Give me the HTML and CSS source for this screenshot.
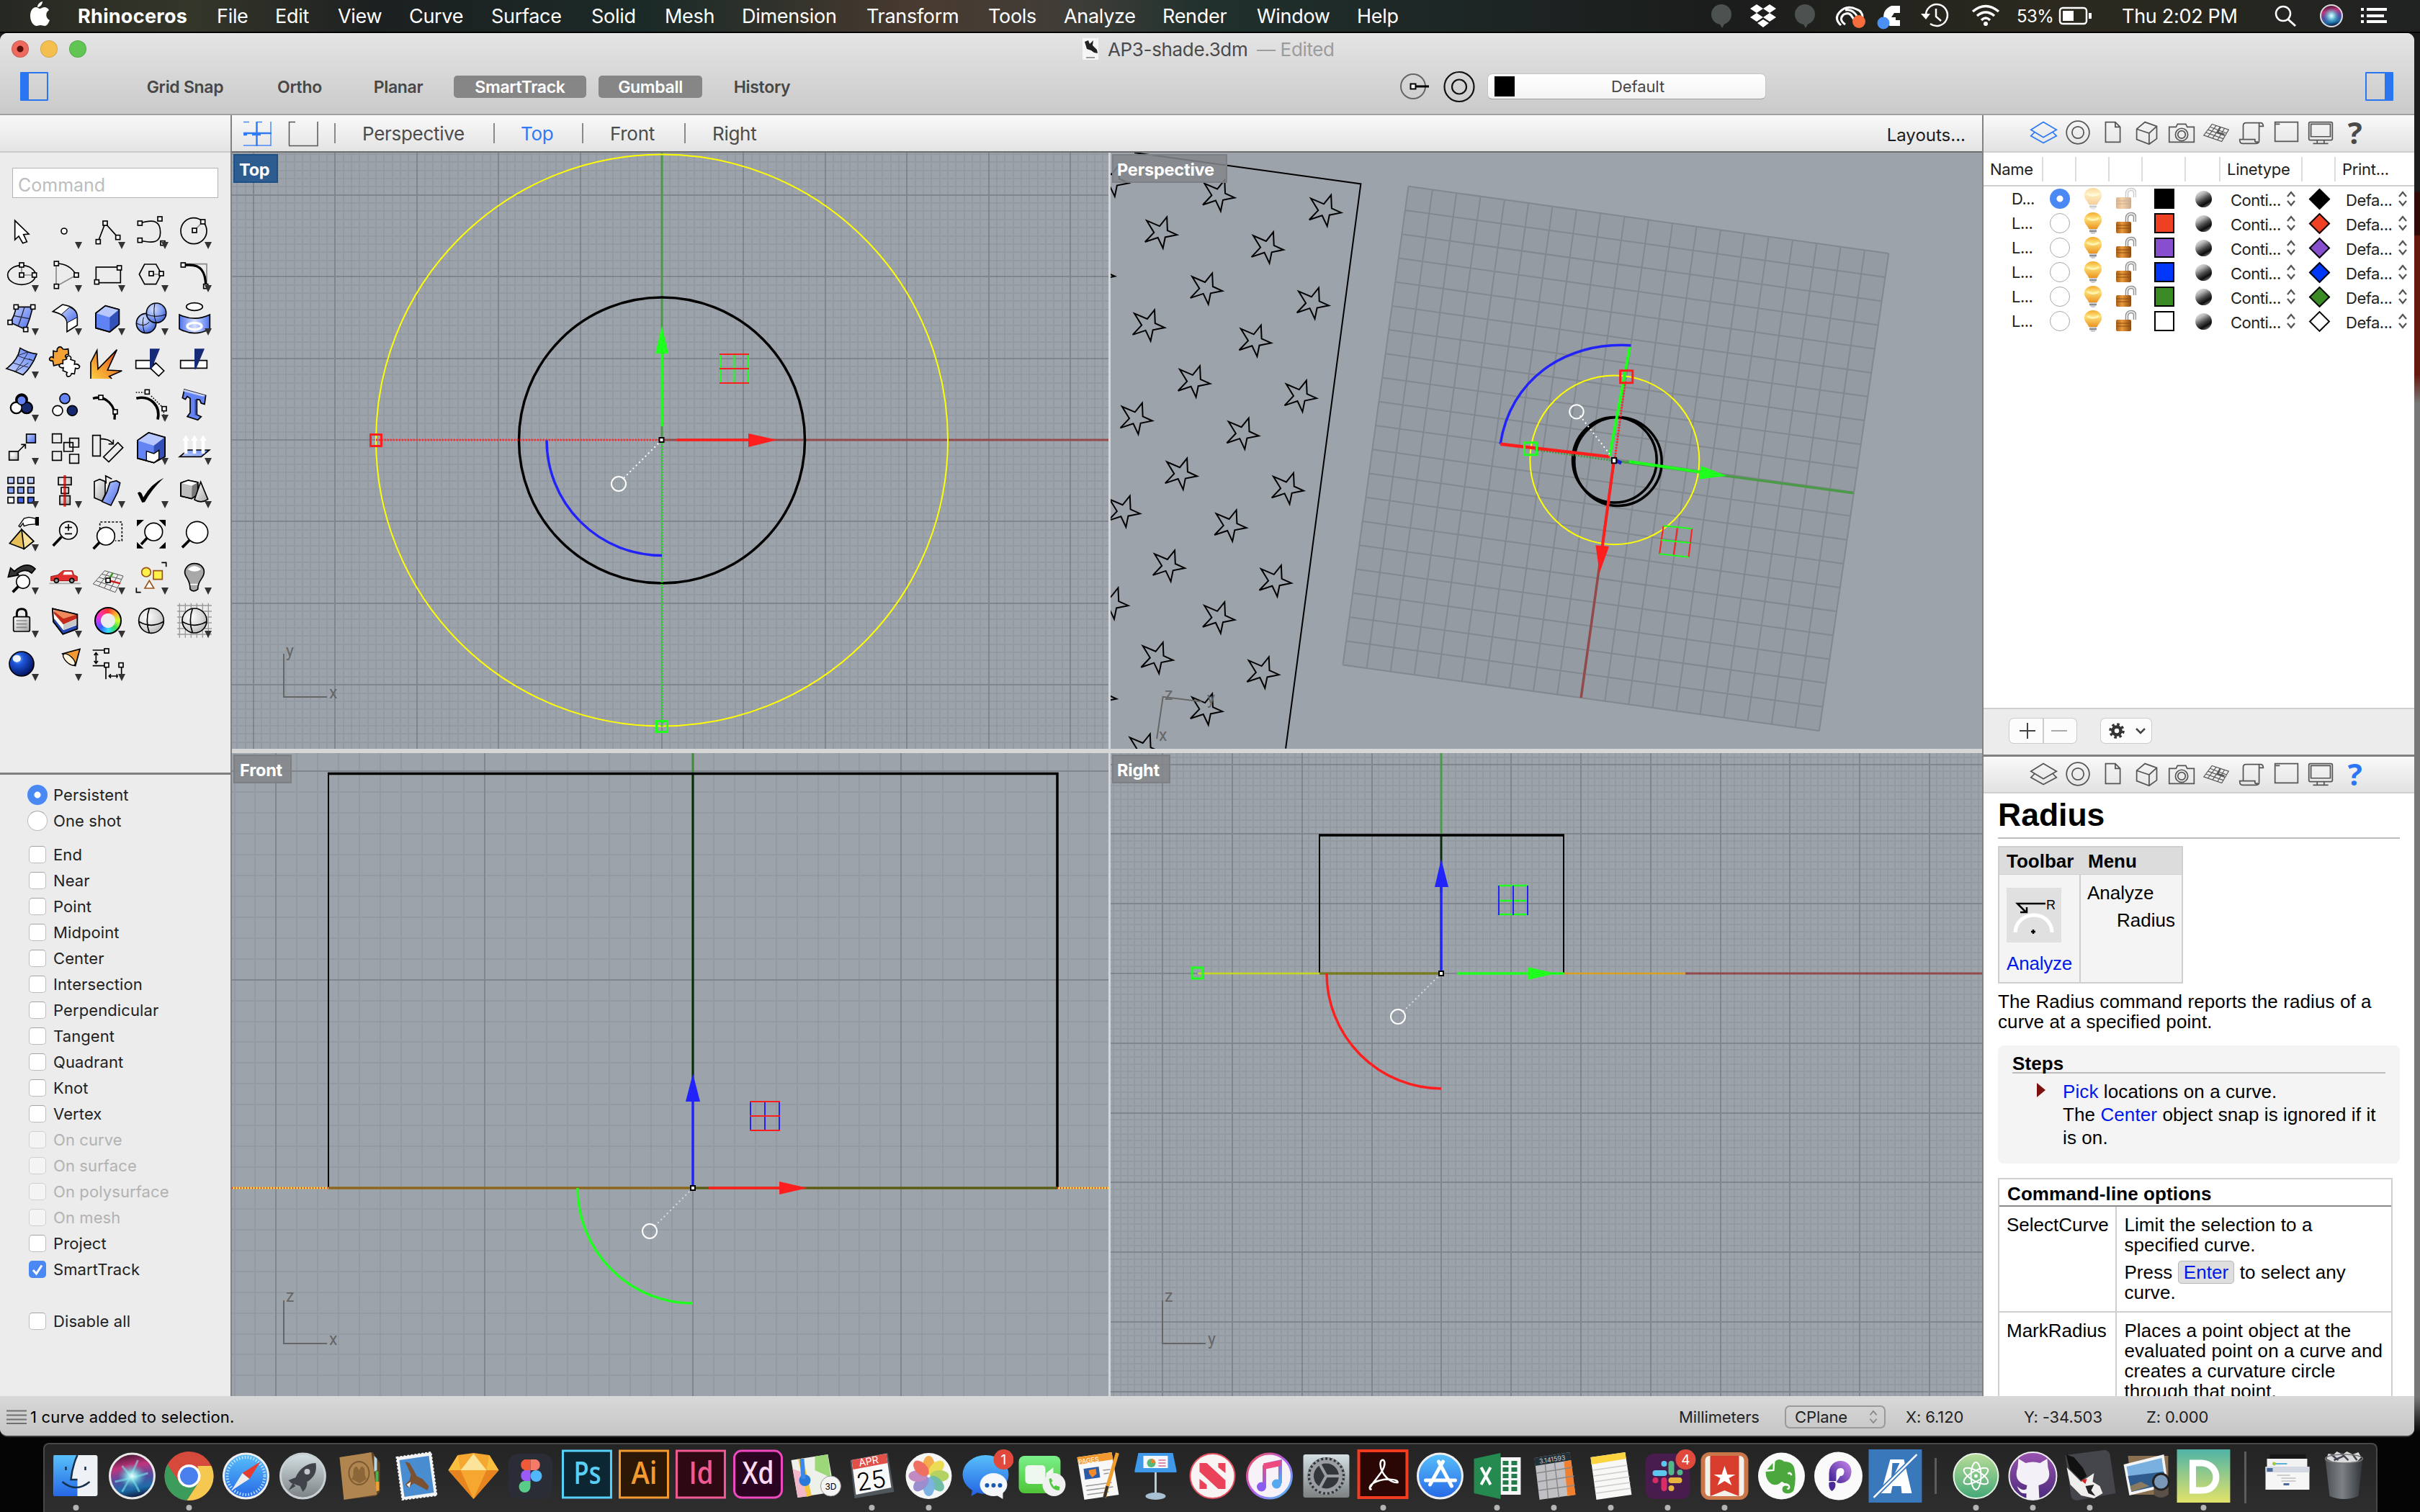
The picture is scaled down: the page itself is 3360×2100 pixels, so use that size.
FILE: index.html
```html
<!DOCTYPE html>
<html lang="en">
<head>
<meta charset="utf-8">
<title>AP3-shade.3dm</title>
<link rel="stylesheet" href="styles.css">
</head>
<body>
<svg class="sprite" width="0" height="0" aria-hidden="true">
<defs>
<linearGradient id="gBlue" x1="0" y1="0" x2="1" y2="1"><stop offset="0" stop-color="#c4d2ff"/><stop offset="1" stop-color="#4a6ae8"/></linearGradient>
<linearGradient id="gBlueR" x1="1" y1="0" x2="0" y2="1"><stop offset="0" stop-color="#5f83f5"/><stop offset="1" stop-color="#c9d5ff"/></linearGradient>
<linearGradient id="gBand" x1="0" y1="0" x2="1" y2="0"><stop offset="0" stop-color="#4f73ee"/><stop offset=".5" stop-color="#d6e0ff"/><stop offset="1" stop-color="#4f73ee"/></linearGradient>
<radialGradient id="gBall" cx=".35" cy=".3" r=".8"><stop offset="0" stop-color="#d5e0ff"/><stop offset=".5" stop-color="#8ba6f5"/><stop offset="1" stop-color="#3357c8"/></radialGradient>
<radialGradient id="gNavy" cx=".35" cy=".3" r=".8"><stop offset="0" stop-color="#7ab0ff"/><stop offset=".3" stop-color="#1c55d8"/><stop offset="1" stop-color="#00084c"/></radialGradient>
<radialGradient id="gGray" cx=".35" cy=".35" r=".8"><stop offset="0" stop-color="#ffffff"/><stop offset=".6" stop-color="#d5d5d5"/><stop offset="1" stop-color="#a8a8a8"/></radialGradient>
<linearGradient id="gGrayL" x1="0" y1="0" x2="1" y2="1"><stop offset="0" stop-color="#ffffff"/><stop offset="1" stop-color="#a5a5a5"/></linearGradient>
<linearGradient id="gFire" x1="0" y1="1" x2="1" y2="0"><stop offset="0" stop-color="#fcd040"/><stop offset=".6" stop-color="#ee7a28"/><stop offset="1" stop-color="#e23c1c"/></linearGradient>
<linearGradient id="gBulb" x1="0" y1="0" x2="0" y2="1"><stop offset="0" stop-color="#f5a92c"/><stop offset=".35" stop-color="#fde27a"/><stop offset="1" stop-color="#eb9420"/></linearGradient>
<linearGradient id="gLock" x1="0" y1="0" x2="1" y2="0"><stop offset="0" stop-color="#a85f18"/><stop offset=".4" stop-color="#e89a3c"/><stop offset="1" stop-color="#8e4a10"/></linearGradient>
<linearGradient id="dSky" x1="0" y1="0" x2="0" y2="1"><stop offset="0" stop-color="#58c0fa"/><stop offset="1" stop-color="#2567e6"/></linearGradient>
<linearGradient id="dGreen" x1="0" y1="0" x2="0" y2="1"><stop offset="0" stop-color="#7bf08a"/><stop offset="1" stop-color="#4fc437"/></linearGradient>
<linearGradient id="dRocket" x1="0" y1="0" x2="0" y2="1"><stop offset="0" stop-color="#d4e0e4"/><stop offset="1" stop-color="#7c8182"/></linearGradient>
<linearGradient id="dD" x1="0" y1="0" x2="0" y2="1"><stop offset="0" stop-color="#4fb3a6"/><stop offset="1" stop-color="#e3e36a"/></linearGradient>
<linearGradient id="dAtom" x1="0" y1="0" x2="0" y2="1"><stop offset="0" stop-color="#b8dc98"/><stop offset="1" stop-color="#44a878"/></linearGradient>
<linearGradient id="dGit" x1="0" y1="0" x2="0" y2="1"><stop offset="0" stop-color="#9a52b0"/><stop offset="1" stop-color="#4a2a7c"/></linearGradient>
<linearGradient id="dP" x1="0" y1="1" x2="1" y2="0"><stop offset="0" stop-color="#4a2a98"/><stop offset="1" stop-color="#b478e0"/></linearGradient>
<linearGradient id="dTune" x1="0" y1="0" x2="1" y2="1"><stop offset="0" stop-color="#f5504a"/><stop offset=".5" stop-color="#b45cf0"/><stop offset="1" stop-color="#42c8f5"/></linearGradient>
<linearGradient id="dNote" x1="0" y1="0" x2="1" y2="1"><stop offset="0" stop-color="#ee4a80"/><stop offset=".5" stop-color="#9a60e0"/><stop offset="1" stop-color="#40b8f0"/></linearGradient>
<linearGradient id="dSiri" x1=".3" y1="0" x2=".5" y2="1"><stop offset="0" stop-color="#38142c"/><stop offset=".3" stop-color="#c0347c"/><stop offset=".55" stop-color="#5a4aa0"/><stop offset=".8" stop-color="#1c6ca8"/><stop offset="1" stop-color="#101638"/></linearGradient>
<radialGradient id="dGlow" cx=".5" cy=".5" r=".5"><stop offset="0" stop-color="#f4ffff"/><stop offset=".35" stop-color="#8ff0f0" stop-opacity=".8"/><stop offset="1" stop-color="#30c0d0" stop-opacity="0"/></radialGradient>
<linearGradient id="dTrash" x1="0" y1="0" x2="1" y2="0"><stop offset="0" stop-color="#4a5054"/><stop offset=".45" stop-color="#7c8286"/><stop offset="1" stop-color="#303438"/></linearGradient>
<g id="h"><rect x="-9" y="-9" width="18" height="18" fill="#fff" stroke="#000" stroke-width="5"/></g>
<symbol id="t-layers" viewBox="-24 -25 48 50"><path d="M-18-4L0-15 19-4 0 7zM-13 0L-18 5 0 15 19 5 14 0"/></symbol>
<symbol id="t-ring" viewBox="-24 -25 48 50"><circle r="16.500"/><circle r="8.500"/></symbol>
<symbol id="t-doc" viewBox="-24 -25 48 50"><path d="M-10-15H4L11-8V14H-10zM4-15V-8H11"/></symbol>
<symbol id="t-cube" viewBox="-24 -25 48 50"><path d="M-15-5L-3-15 14-9V9L3 17-15 10zM-15-5L3 1 14-9M3 1V17"/></symbol>
<symbol id="t-cam" viewBox="-24 -25 48 50"><path d="M-18-8H-8L-6-12H6L8-8H18V14H-18z"/><circle cy="3" r="9"/><circle cy="3" r="5.500"/></symbol>
<symbol id="t-grid" viewBox="-24 -25 48 50"><path stroke-width="1.200" d="M-6-12L18-4 8 13-18 4zM0-10L-12 6M6-8L-5 8M12-6L2 11M-9-8L15 1M-12-4L13 5M-15 0L10 9"/><path stroke-width="2.500" d="M6-8L2 0 12 3"/></symbol>
<symbol id="t-scroll" viewBox="-24 -25 48 50"><path d="M-12 9V-10Q-12-14-8-14H13Q17-14 17-9H11M11-14V12Q11 16 6 16H-13Q-17 16-17 11V10H5V13Q7 15 9 13"/></symbol>
<symbol id="t-win" viewBox="-24 -25 48 50"><path d="M-16-15H17V13H-16zM-15-12H-9"/></symbol>
<symbol id="t-mon" viewBox="-24 -25 48 50"><path d="M-17-13Q-17-15-15-15H15Q17-15 17-13V9Q17 11 15 11H-15Q-17 11-17 9zM-14-12H14V6H-14zM-5 11V15M5 11V15M-11 16H11"/></symbol>
<symbol id="bulb" viewBox="0 0 28 32"><path d="M14 1C6 1 1 7 2 13c1 5 5 7 6 11h12c1-4 5-6 6-11C27 7 22 1 14 1z" fill="url(#gBulb)"/><path d="M6 9Q14 14 22 9" stroke="#fff3b0" stroke-width="3" fill="none"/><path d="M9 24H19V28L16 31H12L9 28z" fill="#c9cdd2"/><path d="M9 27H19" stroke="#777" stroke-width="1.500"/></symbol>
<symbol id="lock" viewBox="0 0 28 32"><path d="M15 15V8Q16 3 21 3Q26 3 26 8V14" stroke="#8e8e8e" stroke-width="4.500" fill="none"/><path d="M15 15V8Q16 3 21 3Q26 3 26 8V14" stroke="#e6e6e6" stroke-width="2" fill="none"/><rect x="0" y="14" width="21" height="16" rx="2" fill="url(#gLock)"/><path d="M0 19H21M0 23H21" stroke="#8a4a12" stroke-width="1"/></symbol>
<symbol id="updown" viewBox="0 0 14 22"><path d="M2 8L7 2 12 8M2 14L7 20 12 14" fill="none" stroke="#555" stroke-width="2.200"/></symbol>
<path id="star" d="M12-38L13-4 30 7 9 13 5 41-4 14-27 25-11 1-24-29-1-15z"/>
</defs>
</svg>

<header class="menubar">
  <svg class="apple" viewBox="0 0 28 34"><path fill="#fff" d="M18 0c0 4-3 8-7 8 0-4 3-7 7-8zM14 10c2 0 4-2 7-2 2 0 4 1 6 4-6 4-4 12 1 14-2 5-4 8-7 8-2 0-3-1-6-1-2 0-4 1-5 1C5 34 1 27 1 20c0-8 4-12 8-12 2 0 4 2 5 2z"/></svg>
  <b>Rhinoceros</b><span>File</span><span>Edit</span><span>View</span><span>Curve</span><span>Surface</span><span>Solid</span><span>Mesh</span><span>Dimension</span><span>Transform</span><span>Tools</span><span>Analyze</span><span>Render</span><span>Window</span><span>Help</span>
  <svg viewBox="2374 0 426 44" class="status-icons" fill="none">
    <g fill="#4b524f"><circle cx="2390" cy="20" r="14"/><path d="M2386 30H2396L2391 39zM2502 30H2512L2507 39z"/><circle cx="2506" cy="20" r="14"/></g>
    <path fill="#fff" d="M2439 6l9 6-9 6-9-6zM2457 6l9 6-9 6-9-6zM2439 18l9 6-9 6-9-6zM2457 18l9 6-9 6-9-6zM2448 27l8 5-8 6-8-6z"/>
    <g stroke="#fff" stroke-width="3"><path d="M2556 35Q2546 26 2554 17Q2564 6 2578 13Q2586 16 2586 24M2562 34Q2552 27 2560 20Q2568 16 2572 24L2578 32M2562 14Q2572 12 2578 22"/></g>
    <circle cx="2581" cy="30" r="9" fill="#f56d3c"/>
    <path fill="#fff" d="M2626 8H2638V18H2630L2626 24H2632V28H2638V36H2624L2616 30Q2612 14 2626 8z"/><circle cx="2615" cy="32" r="8.500" fill="#4a90f5"/>
    <g stroke="#fff" stroke-width="2.500"><path d="M2674 22A15 15 0 1 1 2680 33M2688 12V23L2695 29"/><path d="M2667 19H2680L2674 27z" fill="#fff" stroke="none"/></g>
    <g stroke="#fff" stroke-width="3.500"><path d="M2739 16Q2757 1 2775 16M2745 22Q2757 12 2769 22M2751 28Q2757 22 2763 28"/></g><circle cx="2757" cy="33" r="3" fill="#fff"/>
  </svg>
  <span class="pct">53%</span>
  <svg class="batt" viewBox="0 0 52 44" fill="none"><rect x="5" y="11" width="37" height="22" rx="4" stroke="#fff" stroke-width="2.500"/><rect x="9" y="15" width="15" height="14" fill="#fff"/><path d="M47 18V26" stroke="#fff" stroke-width="4"/></svg>
  <span>Thu 2:02 PM</span>
  <svg viewBox="3140 0 220 44" class="end-icons" fill="none">
    <circle cx="3170" cy="19" r="10" stroke="#fff" stroke-width="2.500"/><path d="M3177 27L3187 36" stroke="#fff" stroke-width="3"/>
    <circle cx="3237" cy="22" r="15" fill="url(#dSiri)" stroke="#ddd" stroke-width="2"/><circle cx="3237" cy="22" r="11" fill="url(#dGlow)"/>
    <path d="M3278 13H3282M3278 22H3282M3278 30H3282M3286 13H3314M3286 22H3310M3286 30H3314" stroke="#fff" stroke-width="4"/>
  </svg>
</header>

<main class="window">
  <section class="titlebar">
    <div class="title-row">
      <i class="light red"></i><i class="light amber"></i><i class="light green"></i>
      <p class="doc-title"><svg viewBox="0 0 22 30"><rect width="22" height="30" fill="#f6f6f6"/><path d="M3 5L8 3 10 8 15 3 14 10 20 16 21 21 16 20 12 17 6 15z" fill="#222"/><path d="M5 27H17" stroke="#999" stroke-width="2"/></svg><span class="t1">AP3-shade.3dm</span><span class="t2">— Edited</span></p>
    </div>
    <div class="mode-row">
      <i class="side-toggle"></i>
      <span class="mode m1">Grid Snap</span><span class="mode m2">Ortho</span><span class="mode m3">Planar</span><span class="mode on m4">SmartTrack</span><span class="mode on m5">Gumball</span><span class="mode m6">History</span>
      <svg class="osnap" viewBox="1940 94 112 52" fill="none"><circle cx="1962" cy="120" r="17" stroke="#666" stroke-width="2"/><path d="M1966 120H1984" stroke="#000" stroke-width="3"/><rect x="1958.500" y="116.500" width="7" height="7" fill="#fff" stroke="#000" stroke-width="2"/><g stroke="#111" stroke-width="2.200"><circle cx="2026" cy="120.500" r="20.500"/><circle cx="2026" cy="120.500" r="10"/></g></svg>
      <div class="layer-pop"><i></i><span>Default</span></div>
      <i class="side-toggle right"></i>
    </div>
  </section>

  <section class="content">
    <aside class="sidebar">
      <div class="side-head"></div>
      <div class="tools-panel">
        <div class="command">Command</div>
        <div class="tools">
<div class="tool"><svg viewBox="0 243 180 180"><path d="M62 289V369L78 354 95 383 112 377 98 347 120 345z" fill="#fff"/></svg></div>
<div class="tool more"><svg viewBox="180 243 180 180"><circle cx="267" cy="333" r="12" fill="#fff"/></svg></div>
<div class="tool more"><svg viewBox="360 243 180 180"><path d="M409 376L438 300 491 359"/><use href="#h" x="409" y="377"/><use href="#h" x="438" y="300"/><use href="#h" x="491" y="359"/></svg></div>
<div class="tool more"><svg viewBox="540 243 180 180"><path d="M583 300C645 280 668 295 668 338 668 380 640 385 583 372"/><use href="#h" x="583" y="300"/><use href="#h" x="583" y="371"/><use href="#h" x="666" y="282"/><use href="#h" x="678" y="383"/></svg></div>
<div class="tool more"><svg viewBox="720 243 180 180"><circle cx="807" cy="332" r="54"/><path class="g" d="M810 330L845 294"/><use href="#h" x="810" y="330"/><use href="#h" x="845" y="294"/></svg></div>

<div class="tool more"><svg viewBox="0 423 180 180"><ellipse cx="90" cy="516" rx="58" ry="40"/><path class="g" d="M90 474V516H143"/><use href="#h" x="90" y="474"/><use href="#h" x="90" y="516"/><use href="#h" x="143" y="516"/></svg></div>
<div class="tool more"><svg viewBox="180 423 180 180"><path class="g" d="M234 468V563L318 516"/><path d="M235 468C275 468 300 485 318 516"/><use href="#h" x="235" y="468"/><use href="#h" x="235" y="563"/><use href="#h" x="318" y="516"/></svg></div>
<div class="tool more"><svg viewBox="360 423 180 180"><rect x="400" y="483" width="102" height="65"/><use href="#h" x="497" y="486"/><use href="#h" x="403" y="545"/></svg></div>
<div class="tool more"><svg viewBox="540 423 180 180"><path d="M580 513L602 471H650L672 510 650 554H602z"/><path class="g" d="M630 513H672"/><use href="#h" x="630" y="510"/><use href="#h" x="672" y="510"/></svg></div>
<div class="tool more"><svg viewBox="720 423 180 180"><path class="g" d="M763 470H861V563"/><path d="M763 474H790C835 474 857 500 857 563" stroke-width="10"/><use href="#h" x="763" y="474"/><use href="#h" x="857" y="563"/></svg></div>

<div class="tool more"><svg viewBox="0 603 180 180"><path d="M67 649H137Q125 700 107 743L42 713Q60 690 67 649z" fill="url(#gBlue)"/><path d="M102 650Q90 690 76 728M55 685L122 698" stroke-width="4" stroke="#223"/><use href="#h" x="67" y="649"/><use href="#h" x="137" y="649"/><use href="#h" x="42" y="713"/><use href="#h" x="107" y="743"/></svg></div>
<div class="tool more"><svg viewBox="180 603 180 180"><path d="M220 668L260 639Q322 648 322 692V725L279 752V712Q275 682 220 668z" fill="#fff"/><path d="M256 680L290 650Q322 665 322 692L279 715Q277 690 256 680z" fill="url(#gBlue)" stroke-width="3"/></svg></div>
<div class="tool more"><svg viewBox="360 603 180 180"><path d="M399 675L439 644 496 660V721L457 753 399 737z" fill="#5f83f5"/><path d="M399 675L439 644 496 660 457 692z" fill="#b8c8ff" stroke="none"/><path d="M457 692L496 660V721L457 753z" fill="#3350b8" stroke="none"/><path d="M399 675L439 644 496 660V721L457 753 399 737z"/></svg></div>
<div class="tool more"><svg viewBox="540 603 180 180"><circle cx="609" cy="717" r="41" fill="url(#gBall)"/><circle cx="651" cy="674" r="41" fill="url(#gBall)"/><path d="M569 717Q600 735 622 712M598 692Q590 717 602 757M611 680Q651 696 691 680M645 634Q636 674 650 715" stroke-width="3"/></svg></div>
<div class="tool more"><svg viewBox="720 603 180 180"><ellipse cx="810" cy="648" rx="34" ry="16" fill="#fff"/><path d="M747 681Q810 712 874 681V740Q810 776 747 740z" fill="url(#gBand)"/><ellipse cx="810" cy="729" rx="30" ry="14" stroke="#fff" stroke-width="10"/></svg></div>

<div class="tool more"><svg viewBox="0 783 180 180"><path d="M84 820Q115 840 153 845 135 895 96 932 60 915 27 906 75 870 84 820z" fill="url(#gBlueR)"/><path d="M118 836Q95 880 62 920M72 852Q105 865 137 872M55 882Q90 895 118 900M84 820L118 836 72 852M118 882L62 920M120 865L137 872" stroke-width="3" stroke="#223"/></svg></div>
<div class="tool"><svg viewBox="180 783 180 180"><path d="M222 832q12 4 16 2 0-6 0-10 12-18 24 0 2 4 22 0l2 22q-12 0-14 8 2 10 14 8l0 14-22 6q-2 10 6 14-8 12-20 2 0-12-12-8l-14 4-4-20q-16 0-14-10 6-12 16-4z" fill="#f4a236"/><path d="M262 870q10 0 16-4-4-10 8-14 14 4 8 16l18 6-2 14q14-4 22 8-2 14-18 8l-4 24-12-2q-4 16-18 12-6-8 0-16l-18-8 2-12q-14 2-18-8 4-12 16-8z" fill="#fff"/></svg></div>
<div class="tool"><svg viewBox="360 783 180 180"><path d="M378 948V880L404 830 408 908 487 827 448 912 508 915 455 938 466 948" fill="url(#gFire)"/></svg></div>
<div class="tool"><svg viewBox="540 783 180 180"><path d="M566 872H640V905H566z" fill="#fff"/><path d="M649 882L683 915 661 937 627 905z" fill="#fff"/><path d="M624 823H666L632 905H624z" fill="#162a78" stroke="none"/></svg></div>
<div class="tool"><svg viewBox="720 783 180 180"><path d="M752 872H862V904H752z" fill="#fff"/><path d="M810 823H852L816 908H810z" fill="#162a78" stroke="none"/></svg></div>

<div class="tool more"><svg viewBox="0 963 180 180"><g stroke-width="10"><circle cx="68" cy="1069" r="22"/><circle cx="111" cy="1069" r="22"/><circle cx="90" cy="1036" r="22"/></g><g stroke="none"><circle cx="68" cy="1069" r="20" fill="#fff"/><circle cx="111" cy="1069" r="20" fill="#16286e"/></g><circle cx="90" cy="1038" r="19" fill="#6484f4"/></svg></div>
<div class="tool"><svg viewBox="180 963 180 180"><circle cx="270" cy="1031" r="21" fill="#6484f4"/><circle cx="240" cy="1081" r="21" fill="#fff"/><circle cx="301" cy="1081" r="21" fill="#16286e"/></svg></div>
<div class="tool"><svg viewBox="360 963 180 180"><path d="M387 1030C440 1015 485 1060 477 1118" stroke-width="10"/><use href="#h" x="420" y="1026"/><use href="#h" x="480" y="1086"/></svg></div>
<div class="tool more"><svg viewBox="540 963 180 180"><path d="M568 1030C625 1015 670 1060 657 1118" stroke-width="11"/><path d="M566 1005H600M630 1020L675 1065M682 1085V1120" stroke-dasharray="5 6"/><use href="#h" x="613" y="1003"/><use href="#h" x="684" y="1073"/></svg></div>
<div class="tool"><svg viewBox="720 963 180 180"><path d="M768 993L857 1018 852 1054 838 1050 832 1036 820 1034V1098L838 1106 824 1120 780 1106 792 1090V1030L780 1022 772 1034 760 1028z" fill="#6484f4"/><path d="M768 993L857 1018 846 1022 762 1000z" fill="#c8d4ff" stroke="none"/><path d="M814 1034V1100" stroke="#3048a8"/></svg></div>

<div class="tool more"><svg viewBox="0 33 180 180"><rect x="110" y="69" width="38" height="36" fill="url(#gBlue)"/><rect x="38" y="141" width="38" height="36" fill="url(#gGray)"/><path d="M76 141L106 111M88 112H106V130"/></svg></div>
<div class="tool"><svg viewBox="180 33 180 180"><path d="M218 68H256V105H218zM218 141H256V178H218zM290 86H328V123H290zM266 104H304V141H266zM290 153H328V190H290z"/></svg></div>
<div class="tool"><svg viewBox="360 33 180 180"><path d="M386 74H418V160H386zM491 104L512 125 453 185 431 164zM418 88Q455 88 470 108M472 92V110H452"/></svg></div>
<div class="tool more"><svg viewBox="540 33 180 180"><path d="M573 95L619 63 687 82V163L641 188 573 170z" fill="#6484f4"/><path d="M573 95L619 63 687 82 641 117z" fill="#b8c8ff" stroke="none"/><path d="M641 117L687 82V163L641 188z" fill="#3350b8" stroke="none"/><path d="M610 140L641 150 662 136V172L641 188 610 180z" fill="#fff" stroke-width="4"/><path d="M573 95L619 63 687 82V163L641 188 573 170z"/></svg></div>
<div class="tool more"><svg viewBox="720 33 180 180"><path d="M782 135H872L838 163H748z" fill="url(#gBlueR)"/><path d="M774 150V90M810 150V90M846 150V90" stroke="#fff" stroke-width="14"/><path d="M760 96L774 72 788 96zM796 96L810 72 824 96zM832 96L846 72 860 96z" fill="#fff" stroke="none"/></svg></div>

<div class="tool more"><svg viewBox="0 213 180 180"><g fill="#c0ceff"><path d="M33 249H58V274H33zM74 249H99V274H74zM116 249H141V274H116z"/></g><g fill="#8aa4f8"><path d="M33 290H58V315H33zM74 290H99V315H74zM116 290H141V315H116z"/></g><path fill="#fff" d="M33 332H58V356H33z"/><path fill="#4468e8" d="M74 332H99V356H74zM116 332H141V356H116z"/></svg></div>
<div class="tool more"><svg viewBox="180 213 180 180"><path d="M243 249H297V280H243zM255 291H286V316H255zM249 326H292V362H249z" fill="url(#gGray)"/><path d="M270 240V371" stroke="#c00" stroke-opacity=".75" stroke-width="11"/></svg></div>
<div class="tool more"><svg viewBox="360 213 180 180"><path d="M393 266L415 257 438 266V320L425 348 393 334z" fill="url(#gGrayL)"/><path d="M442 275L440 243 466 256"/><path d="M458 270L485 263 500 272 490 310 462 366 425 350 445 310z" fill="url(#gBlue)"/></svg></div>
<div class="tool more"><svg viewBox="540 213 180 180"><path d="M573 314Q582 304 590 316L597 332Q630 275 682 251 630 300 603 352L592 354z" fill="#000" stroke="none"/></svg></div>
<div class="tool more"><svg viewBox="720 213 180 180"><path d="M753 272L784 261 824 270V320L798 338 753 327z" fill="#bdbdbd"/><path d="M753 272L784 261 824 270 800 284z" fill="#fff" stroke="none"/><path d="M800 284L824 270V320L798 338z" fill="#777" stroke="none"/><path d="M753 272L784 261 824 270V320L798 338 753 327z"/><path d="M836 268L866 340Q838 360 810 342z" fill="url(#gGrayL)"/></svg></div>

<div class="tool more"><svg viewBox="0 393 180 180"><path d="M90 466L140 515 100 547 40 524z" fill="#e6bf58"/><path d="M90 466L100 547 140 515z" fill="#f7e09a"/><path d="M78 452L100 420 120 415 148 420V444L120 446 100 452 96 440 84 456z" fill="#fff" stroke-width="4"/><path d="M148 414H162V450H148z" fill="#000" stroke="none"/></svg></div>
<div class="tool"><svg viewBox="180 393 180 180"><path d="M256 497L221 534" stroke-width="11"/><circle cx="285" cy="470" r="37" fill="#fff" fill-opacity=".3"/><path d="M270 458H300M285 444V472M270 484H300"/></svg></div>
<div class="tool"><svg viewBox="360 393 180 180"><path d="M416 465V435H508V513H480" stroke-dasharray="9 7"/><path d="M416 518L389 547" stroke-width="11"/><circle cx="441" cy="494" r="37" fill="#fff"/></svg></div>
<div class="tool"><svg viewBox="540 393 180 180"><path d="M570 426H600L570 454zM690 426V454L662 426zM570 518L598 545H570zM690 518V545H662z" fill="#000" stroke="none"/><path d="M614 500L588 528" stroke-width="11"/><circle cx="640" cy="476" r="37" fill="#fff"/></svg></div>
<div class="tool"><svg viewBox="720 393 180 180"><path d="M790 510L759 541" stroke-width="11"/><circle cx="821" cy="478" r="45" fill="#fff"/></svg></div>

<div class="tool more"><svg viewBox="0 573 180 180"><path d="M34 664L44 626 60 640Q110 595 147 630L132 648Q105 625 72 650L78 656z" fill="#333"/><path d="M76 704L53 727" stroke-width="11"/><circle cx="96" cy="684" r="28" fill="#fff"/></svg></div>
<div class="tool more"><svg viewBox="180 573 180 180"><path d="M205 691H335" stroke="#aaa"/><path d="M212 662L240 656 262 638H302L308 656 322 662V680H212z" fill="#e23030" stroke="#a01010" stroke-width="3"/><path d="M268 642H298L302 655H262z" fill="#fff" stroke="none"/><g fill="#999"><circle cx="235" cy="679" r="9"/><circle cx="299" cy="679" r="9"/></g></svg></div>
<div class="tool more"><svg viewBox="360 573 180 180"><path d="M436 638L513 660 480 728 388 693zM453 643L411 702M471 648L434 711M492 654L457 720M424 652L506 674M412 666L498 691M400 680L489 709" stroke="#555" stroke-width="3"/><path d="M450 678L470 648" stroke="#3a9a20" stroke-width="7"/><path d="M450 678L501 691" stroke="#d01818" stroke-width="7"/><use href="#h" x="450" y="678"/></svg></div>
<div class="tool more"><svg viewBox="540 573 180 180"><g stroke="#98531a"><circle cx="609" cy="644" r="19" fill="#fff04a"/><path d="M639 638H676V674H639z" fill="#fff04a"/><path d="M622 679L641 711H603z" fill="#fff"/></g><path d="M673 604H692V622M568 709V728H587"/></svg></div>
<div class="tool more"><svg viewBox="720 573 180 180"><path d="M810 608C780 608 764 635 772 655 780 675 792 680 792 715Q806 730 824 715C824 680 842 675 848 655 856 632 840 608 810 608z" fill="#a8a8a8"/><path d="M782 632Q810 605 838 632 810 650 782 632z" fill="#fff" stroke="none"/><path d="M793 695H823" stroke="#fff"/></svg></div>

<div class="tool more"><svg viewBox="0 753 180 180"><path d="M70 830V815Q70 797 90 797 110 797 110 815V830" stroke-width="9"/><rect x="56" y="830" width="68" height="61" rx="6" fill="url(#gGrayL)"/><path d="M68 846H112M68 860H112M68 874H112" stroke="#888"/></svg></div>
<div class="tool more"><svg viewBox="180 753 180 180"><path d="M219 796L322 820V880L262 902 222 850z" fill="#fff"/><path d="M219 796L322 820 264 862z" fill="#f08a5c" stroke="none"/><path d="M264 838L322 820V836L264 862 224 816V806z" fill="#c22a1c" stroke="none"/><path d="M226 838L264 886 322 864V880L262 902 222 850z" fill="#2448b0" stroke="none"/><path d="M264 862L322 838V862L264 884z" fill="#c8c8c8" stroke="none"/><path d="M219 796L322 820V880L262 902 222 850z"/></svg></div>
<div class="tool more"><div class="wheel"></div></div>
<div class="tool"><svg viewBox="540 753 180 180"><circle cx="630" cy="846" r="52" fill="url(#gGray)"/><path d="M578 850Q630 880 682 850M622 794Q604 846 622 897"/></svg></div>
<div class="tool more"><svg viewBox="720 753 180 180"><path d="M738 783H882M738 807H882M738 831H882M738 855H882M738 879H882M738 903H882M748 773V917M772 773V917M796 773V917M820 773V917M844 773V917M868 773V917" stroke="#999" stroke-width="4"/><circle cx="810" cy="846" r="51" fill="url(#gGray)"/><path d="M759 850Q810 880 861 850M802 795Q784 846 802 896"/></svg></div>

<div class="tool more"><svg viewBox="0 933 180 180"><circle cx="90" cy="1026" r="51" fill="url(#gNavy)"/><ellipse cx="70" cy="1004" rx="17" ry="15" fill="#fff" stroke="none" opacity=".9"/></svg></div>
<div class="tool more"><svg viewBox="180 933 180 180"><path d="M260 984L333 964 314 1034 300 1030z" fill="#f59a30"/><ellipse cx="288" cy="1008" rx="32" ry="14" transform="rotate(43 288 1008)" fill="#fff6dc" stroke-width="4"/></svg></div>
<div class="tool more"><svg viewBox="360 933 180 180"><path d="M386 969H436M386 1034H436M400 982V1022M392 990L400 980 408 990M392 1014L400 1024 408 1014M441 1040V1090M506 1040V1072M455 1077H492M462 1069L454 1077 462 1085M487 1069V1085"/><use href="#h" x="444" y="972"/><use href="#h" x="444" y="1031"/><use href="#h" x="504" y="1031"/></svg></div>
        </div>
      </div>
      <ul class="snaps">
        <li><i class="radio on"></i>Persistent</li>
        <li><i class="radio"></i>One shot</li>
        <li class="gap"><i></i>End</li>
        <li><i></i>Near</li>
        <li><i></i>Point</li>
        <li><i></i>Midpoint</li>
        <li><i></i>Center</li>
        <li><i></i>Intersection</li>
        <li><i></i>Perpendicular</li>
        <li><i></i>Tangent</li>
        <li><i></i>Quadrant</li>
        <li><i></i>Knot</li>
        <li><i></i>Vertex</li>
        <li class="off"><i></i>On curve</li>
        <li class="off"><i></i>On surface</li>
        <li class="off"><i></i>On polysurface</li>
        <li class="off"><i></i>On mesh</li>
        <li><i></i>Project</li>
        <li><i class="checked"><svg viewBox="0 0 24 24"><path d="M6 13L10.500 18 18 6.500" fill="none" stroke="#fff" stroke-width="3"/></svg></i>SmartTrack</li>
        <li class="last"><i></i>Disable all</li>
      </ul>
    </aside>

    <section class="center">
      <nav class="view-tabs">
        <svg class="vicons" viewBox="330 160 120 50" fill="none" stroke-width="2"><path d="M338 169.500H346M357 169.500H364M338 202H376M376 169V203" stroke="#4a8af6" stroke-width="1.500"/><path d="M356.500 169V203M338 185H377M338 187H343M350 187H362" stroke="#2f7af5" stroke-width="2.500"/><path d="M401.500 202V169.500H410M441 169V202.500H401" stroke="#555" stroke-width="1.500"/></svg>
        <span class="v1">Perspective</span><span class="v2 active">Top</span><span class="v3">Front</span><span class="v4">Right</span><span class="layouts">Layouts...</span>
      </nav>
      <div class="views">
        <svg class="view" viewBox="322 212 1217 828">
          <g class="cgrid" data-grid="322 212 1539 1040 919 611 11.34"></g>
          <g fill="none">
            <path d="M919 212V611" stroke="#4a9a48" stroke-width="3"/><path d="M919 611H1539" stroke="#924a4a" stroke-width="3"/>
            <circle cx="919" cy="611.500" r="397" stroke="#ff0" stroke-width="2"/>
            <circle cx="919" cy="611.500" r="198.500" stroke="#000" stroke-width="3.500"/>
            <path d="M522 611H919" stroke="#f22" stroke-width="3" stroke-dasharray="1.500 2.500"/><path d="M919 611V1009" stroke="#1ee01e" stroke-width="3" stroke-dasharray="2 2"/>
            <path d="M759 611.500A160 160 0 0 0 919 771.500" stroke="#2222fa" stroke-width="3.500"/>
            <path d="M919 592V470" stroke="#1eff1e" stroke-width="3.500"/><path d="M910 491L919 452 928 491z" fill="#1eff1e"/>
            <path d="M940 611H1050" stroke="#ff1e1e" stroke-width="3.500"/><path d="M1039 602L1079 611 1039 621z" fill="#ff1e1e"/>
            <path d="M1000 492V532M1019.500 492V532M1039 492V532" stroke="#1eff1e" stroke-width="2"/><path d="M999 492H1040M999 512H1040M999 532H1040" stroke="#ff1e1e" stroke-width="2"/>
            <path d="M866 664L919 611" stroke="#fff" stroke-width="2" stroke-dasharray="2 4"/><circle cx="859" cy="672" r="10" stroke="#fff" stroke-width="2"/>
            <rect x="514.500" y="603.500" width="15" height="16" stroke="#ff1e1e" stroke-width="3"/><rect x="911.500" y="1001.500" width="15" height="15" stroke="#1eff1e" stroke-width="3"/>
            <rect x="915.500" y="608" width="6" height="6" fill="#fff" stroke="#000" stroke-width="2"/>
            <path d="M394 908V968H454" stroke="#666" stroke-width="2"/>
          </g>
          <text class="ax" x="397" y="912">y</text><text class="ax" x="457" y="970">x</text>
          <rect x="325" y="215" width="60" height="38" fill="#2d5d90" stroke="#1e4f85" stroke-width="2"/><text class="vl" x="332" y="244">Top</text>
        </svg>
        <svg class="view" viewBox="1542 212 1210 828">
          <g transform="matrix(.7781 0 0 .54846 1540 200)" class="persp" fill="none">
            <path d="M534 107L1391 277 1267 1486 417 1319z" fill="#949ba3"/>
            <g id="floor" stroke="#83888f" stroke-width="2"></g>
            <path d="M45 22L449 101 315 1531" stroke="#000" stroke-width="2"/>
            <g id="stars" stroke="#000" stroke-width="2"></g>
            <path d="M901 802L1328 884" stroke="#4a9a48" stroke-width="3.500"/><path d="M901 802L842 1402" stroke="#924a4a" stroke-width="3.500"/>
            <ellipse cx="902" cy="800" rx="151" ry="214" stroke="#ff0" stroke-width="2"/>
            <ellipse cx="902" cy="800" rx="75" ry="108" stroke="#000" stroke-width="3.500"/><ellipse cx="908" cy="804" rx="78" ry="112" stroke="#000" stroke-width="3.500"/>
            <path d="M902 800L921 600" stroke="#f22" stroke-width="3" stroke-dasharray="2 2"/><path d="M760 774L901 802" stroke="#3a9a38" stroke-width="3" stroke-dasharray="2 2"/>
            <path d="M698 760C715 600 810 500 931 510" stroke="#2222fa" stroke-width="3.500"/>
            <path d="M698 760L893 792" stroke="#ff1e1e" stroke-width="4.500"/><path d="M893 790L929 515" stroke="#1eff1e" stroke-width="4"/>
            <path d="M928 804L1060 832" stroke="#1eff1e" stroke-width="4"/><path d="M1056 815L1102 840 1053 849z" fill="#1eff1e"/>
            <path d="M900 808L880 1020" stroke="#ff1e1e" stroke-width="4"/><path d="M868 1016L892 1019 875 1086z" fill="#ff1e1e"/>
            <path d="M989 967L982 1038M1014 970L1007 1042M1040 974L1034 1046" stroke="#ff1e1e" stroke-width="2"/><path d="M989 967L1040 974M985 1003L1037 1010M982 1038L1034 1046" stroke="#1eff1e" stroke-width="2"/>
            <path d="M840 688L893 785" stroke="#fff" stroke-width="2" stroke-dasharray="2 4"/><ellipse cx="834" cy="678" rx="12.500" ry="17.500" stroke="#fff" stroke-width="2"/>
            <path d="M902 800L914 808" stroke="#22c" stroke-width="5"/>
            <path d="M912 574H934V605H912z" stroke="#ff1e1e" stroke-width="3"/><path d="M741 756H763V787H741z" stroke="#1eff1e" stroke-width="3"/>
            <path d="M897 795H905V808H897z" fill="#fff" stroke="#000" stroke-width="2"/>
            <path d="M85 1506L96 1400 165 1412" stroke="#666" stroke-width="2"/>
          </g>
          <text class="ax" x="1617" y="972">z</text><text class="ax" x="1676" y="978">y</text><text class="ax" x="1609" y="1029">x</text>
          <rect x="1545" y="215" width="158" height="38" fill="#84878b" fill-opacity=".85" stroke="#7c8085" stroke-width="2"/><text class="vl" x="1551" y="244">Perspective</text>
        </svg>
        <svg class="view" viewBox="322 1046 1217 893">
          <g class="cgrid" data-grid="322 1046 1539 1939 962 1650 28.93"></g>
          <g fill="none">
            <path d="M962 1046V1500" stroke="#3f8a3e" stroke-width="3"/><path d="M962 1075V1500" stroke="#0c2a0c" stroke-width="3"/>
            <path d="M456 1650V1074" stroke="#000" stroke-width="2"/><path d="M455 1074.500H1468V1650" stroke="#000" stroke-width="3.500"/>
            <path d="M322 1650H1539" stroke="#f0e020" stroke-width="2.500"/><path d="M322 1650H456M1468 1650H1539" stroke="#d02010" stroke-width="2.500" stroke-dasharray="1 3"/><path d="M456 1650H962" stroke="#8a6420" stroke-width="3.500"/><path d="M962 1650H1468" stroke="#5a5a18" stroke-width="3.500"/>
            <path d="M802 1650A160 160 0 0 0 962 1810" stroke="#1eff1e" stroke-width="3.500"/>
            <path d="M962 1650V1520" stroke="#2222fa" stroke-width="3.500"/><path d="M952 1530L962 1491 972 1530z" fill="#2222fa"/>
            <path d="M984 1650H1085" stroke="#ff1e1e" stroke-width="3.500"/><path d="M1082 1641L1121 1650 1082 1659z" fill="#ff1e1e"/>
            <path d="M1042 1530V1570M1062 1530V1570M1082 1530V1570M1042 1550H1082" stroke="#2222fa" stroke-width="2"/><path d="M1041 1530H1083M1041 1570H1083M1041 1550H1083" stroke="#ff1e1e" stroke-width="2"/>
            <path d="M909 1703L962 1650" stroke="#ddd" stroke-width="2" stroke-dasharray="2 4"/><circle cx="902" cy="1710" r="10" stroke="#fff" stroke-width="2"/>
            <rect x="959" y="1647" width="6" height="6" fill="#fff" stroke="#000" stroke-width="2"/>
            <path d="M394 1806V1866H454" stroke="#666" stroke-width="2"/>
          </g>
          <text class="ax" x="397" y="1808">z</text><text class="ax" x="457" y="1868">x</text>
          <rect x="325" y="1049" width="79" height="38" fill="#84878b" fill-opacity=".85" stroke="#7c8085" stroke-width="2"/><text class="vl" x="333" y="1078">Front</text>
        </svg>
        <svg class="view" viewBox="1542 1046 1210 893">
          <g class="cgrid" data-grid="1542 1046 2752 1939 2001.4 1352 9.68"></g>
          <g fill="none">
            <path d="M2001 1046V1160" stroke="#4a9a48" stroke-width="3"/><path d="M2001 1160V1240" stroke="#0c2a0c" stroke-width="3"/>
            <path d="M1832 1352V1160M2171 1160V1352" stroke="#000" stroke-width="2"/><path d="M1831 1160H2172" stroke="#000" stroke-width="3.500"/>
            <path d="M1663 1352H1832" stroke="#c8d820" stroke-width="2.500"/><path d="M1832 1352H2001" stroke="#7a7a20" stroke-width="3.500"/><path d="M2171 1352H2340" stroke="#d8a020" stroke-width="2.500"/><path d="M2340 1352H2752" stroke="#924a4a" stroke-width="3"/>
            <path d="M1842 1352A160 160 0 0 0 2001 1512" stroke="#ff1e1e" stroke-width="3.500"/>
            <path d="M2001 1352V1230" stroke="#2222fa" stroke-width="3.500"/><path d="M1992 1232L2001 1193 2011 1232z" fill="#2222fa"/>
            <path d="M2023 1352H2171" stroke="#1eff1e" stroke-width="3.500"/><path d="M2121 1343L2160 1352 2121 1361z" fill="#1eff1e"/>
            <path d="M2081 1230H2122M2081 1251H2122M2081 1270H2122" stroke="#1eff1e" stroke-width="2.500"/><path d="M2081 1230V1271M2101 1230V1271M2121 1230V1271" stroke="#2222fa" stroke-width="2"/>
            <path d="M1948 1405L2001 1352" stroke="#ddd" stroke-width="2" stroke-dasharray="2 4"/><circle cx="1941" cy="1412" r="10" stroke="#fff" stroke-width="2"/>
            <rect x="1655" y="1344" width="15" height="15" stroke="#1eff1e" stroke-width="3"/>
            <rect x="1998" y="1349" width="6" height="6" fill="#fff" stroke="#000" stroke-width="2"/>
            <path d="M1614 1806V1866H1674" stroke="#666" stroke-width="2"/>
          </g>
          <text class="ax" x="1617" y="1808">z</text><text class="ax" x="1677" y="1868">y</text>
          <rect x="1545" y="1049" width="79" height="38" fill="#84878b" fill-opacity=".85" stroke="#7c8085" stroke-width="2"/><text class="vl" x="1551" y="1078">Right</text>
        </svg>
      </div>
    </section>

    <aside class="inspector">
      <nav class="ptabs"><svg class="sel"><use href="#t-layers"/></svg><svg><use href="#t-ring"/></svg><svg><use href="#t-doc"/></svg><svg><use href="#t-cube"/></svg><svg><use href="#t-cam"/></svg><svg><use href="#t-grid"/></svg><svg><use href="#t-scroll"/></svg><svg><use href="#t-win"/></svg><svg><use href="#t-mon"/></svg><b>?</b></nav>
      <div class="layers">
        <div class="lrow lhead"><span>Name</span><span></span><span></span><span></span><span></span><span></span><span>Linetype</span><span></span><span>Print...</span></div>
        <div class="lrow"><span class="nm">D...</span><i class="radio on"></i><svg class="ic dim"><use href="#bulb"/></svg><svg class="ic dim"><use href="#lock"/></svg><i class="sw c0"></i><i class="mat"></i><span class="lt">Conti...<svg><use href="#updown"/></svg></span><i class="dia c0"></i><span class="lt">Defa...<svg><use href="#updown"/></svg></span></div>
        <div class="lrow"><span class="nm">L...</span><i class="radio"></i><svg class="ic"><use href="#bulb"/></svg><svg class="ic"><use href="#lock"/></svg><i class="sw c1"></i><i class="mat"></i><span class="lt">Conti...<svg><use href="#updown"/></svg></span><i class="dia c1"></i><span class="lt">Defa...<svg><use href="#updown"/></svg></span></div>
        <div class="lrow"><span class="nm">L...</span><i class="radio"></i><svg class="ic"><use href="#bulb"/></svg><svg class="ic"><use href="#lock"/></svg><i class="sw c2"></i><i class="mat"></i><span class="lt">Conti...<svg><use href="#updown"/></svg></span><i class="dia c2"></i><span class="lt">Defa...<svg><use href="#updown"/></svg></span></div>
        <div class="lrow"><span class="nm">L...</span><i class="radio"></i><svg class="ic"><use href="#bulb"/></svg><svg class="ic"><use href="#lock"/></svg><i class="sw c3"></i><i class="mat"></i><span class="lt">Conti...<svg><use href="#updown"/></svg></span><i class="dia c3"></i><span class="lt">Defa...<svg><use href="#updown"/></svg></span></div>
        <div class="lrow"><span class="nm">L...</span><i class="radio"></i><svg class="ic"><use href="#bulb"/></svg><svg class="ic"><use href="#lock"/></svg><i class="sw c4"></i><i class="mat"></i><span class="lt">Conti...<svg><use href="#updown"/></svg></span><i class="dia c4"></i><span class="lt">Defa...<svg><use href="#updown"/></svg></span></div>
        <div class="lrow"><span class="nm">L...</span><i class="radio"></i><svg class="ic"><use href="#bulb"/></svg><svg class="ic"><use href="#lock"/></svg><i class="sw c5"></i><i class="mat"></i><span class="lt">Conti...<svg><use href="#updown"/></svg></span><i class="dia c5"></i><span class="lt">Defa...<svg><use href="#updown"/></svg></span></div>
      </div>
      <div class="lbar">
        <svg class="pm" viewBox="0 0 93 34" fill="none"><path d="M25 6V28M14 17H36" stroke="#444" stroke-width="2"/><path d="M47 0V34" stroke="#ccc" stroke-width="2"/><path d="M58 17H80" stroke="#aaa" stroke-width="2"/></svg>
        <svg class="gear" viewBox="0 0 70 34" fill="none"><circle cx="22" cy="17" r="5.500" stroke="#333" stroke-width="4.500"/><circle cx="22" cy="17" r="9" stroke="#333" stroke-width="3.500" stroke-dasharray="3.530 3.530"/><path d="M49 14L55 20 61 14" stroke="#444" stroke-width="2.500"/></svg>
      </div>
      <nav class="ptabs lower"><svg><use href="#t-layers"/></svg><svg><use href="#t-ring"/></svg><svg><use href="#t-doc"/></svg><svg><use href="#t-cube"/></svg><svg><use href="#t-cam"/></svg><svg><use href="#t-grid"/></svg><svg><use href="#t-scroll"/></svg><svg><use href="#t-win"/></svg><svg><use href="#t-mon"/></svg><b class="sel">?</b></nav>
      <article class="help">
        <h1>Radius</h1>
        <div class="where">
          <div class="wh"><b>Toolbar</b><b>Menu</b></div>
          <div class="wb"><div class="w1"><svg viewBox="0 0 76 76"><rect width="76" height="76" fill="#e0e0e0"/><path d="M54 22H15L27 34M19 34H28V27" fill="none" stroke="#000" stroke-width="2.500"/><path d="M12 62C14 30 62 30 63 62" fill="none" stroke="#fff" stroke-width="5"/><path d="M34 61H40M37 58V64" stroke="#000" stroke-width="2.500"/><text x="55" y="30" class="r">R</text></svg><a>Analyze</a></div><div class="w2"><span>Analyze</span><span class="in">Radius</span></div></div>
        </div>
        <p class="intro">The Radius command reports the radius of a curve at a specified point.</p>
        <div class="steps"><h2>Steps</h2><div class="step"><i></i><p><a>Pick</a> locations on a curve.<br>The <a>Center</a> object snap is ignored if it is on.</p></div></div>
        <div class="opts">
          <h3>Command-line options</h3>
          <div class="orow"><span>SelectCurve</span><div><p>Limit the selection to a specified curve.</p><p>Press <kbd>Enter</kbd> to select any curve.</p></div></div>
          <div class="orow"><span>MarkRadius</span><div><p>Places a point object at the evaluated point on a curve and creates a curvature circle through that point.</p></div></div>
        </div>
      </article>
    </aside>
  </section>

  <footer class="statusbar">
    <svg viewBox="0 0 28 20"><path d="M0 1.500H28M0 7.500H28M0 13.500H28M0 19H28" stroke="#707070" stroke-width="2"/></svg>
    <span class="s0">1 curve added to selection.</span><span class="s1">Millimeters</span><span class="cplane">CPlane<svg viewBox="0 0 14 22"><path d="M2 8L7 2 12 8M2 14L7 20 12 14" fill="none" stroke="#888" stroke-width="2"/></svg></span><span class="s2">X: 6.120</span><span class="s3">Y: -34.503</span><span class="s4">Z: 0.000</span>
  </footer>
</main>

<footer class="dock">
<svg viewBox="-39.500 -44 79 96"><rect x="-31" y="-29" width="61" height="57" rx="3" fill="#eef2f6"/><path d="M-31-29H2Q-5-14-7 5H2V28H-31z" fill="url(#dSky)"/><path d="M2-29Q-5-14-7 5H2M-14-13V-8M13-13V-8M-19 8Q0 24 19 8" fill="none" stroke="#15304c" stroke-width="2.500"/><circle class="dot" cy="44" r="4"/></svg>
<svg viewBox="-39.500 -44 79 96"><circle r="31" fill="url(#dSiri)" stroke="#e8e8e8" stroke-width="3"/><path d="M-24 8Q-4 4 22-4M-14 22Q-2 2 8-22M10 22Q2 4-14-14" fill="none" stroke="#7ff0f0" stroke-width="3" opacity=".55"/><ellipse rx="20" ry="17" fill="url(#dGlow)"/></svg>
<svg viewBox="-39.500 -44 79 96"><circle r="34" fill="#d64a3c"/><path d="M-30-16A34 34 0 0 0-3 34L14 8-14 8z" fill="#3c9c5c"/><path d="M31-14A34 34 0 0 1-3 34L14 8 12-14z" fill="#f5c850"/><circle r="16" fill="#fff"/><circle r="12.500" fill="#4a80ee"/><circle class="dot" cy="44" r="4"/></svg>
<svg viewBox="-39.500 -44 79 96"><circle r="31" fill="url(#dSky)" stroke="#eee" stroke-width="3"/><circle r="26" fill="none" stroke="#bfe4ff" stroke-width="4" stroke-dasharray="1.500 2.500"/><path d="M20-20L5 4-5-4z" fill="#e43d30"/><path d="M-20 20L5 4-5-4z" fill="#eee"/></svg>
<svg viewBox="-39.500 -44 79 96"><circle r="31" fill="url(#dRocket)" stroke="#c8d0d4" stroke-width="3"/><path d="M18-18C4-18-6-8-10 2L-20 6-16 10-4 14 0 22C4 18 6 14 6 8 16 2 20-6 18-18zM-14 10L-20 20-10 14z" fill="#40444a"/><circle cx="6" cy="-6" r="4" fill="#c0c8cc"/></svg>
<svg viewBox="-39.500 -44 79 96"><path d="M-28-26L18-33 28-18V22L22 28-22 33z" fill="#5e4526"/><path d="M20-28L24-24V-8L20-6z" fill="#b8d8e8"/><path d="M22-8L26-6V8L22 8z" fill="#50b050"/><path d="M22 8L27 8V20L22 22z" fill="#f0a030"/><path d="M-28-26L16-33 24 26-22 33z" fill="#b08550"/><ellipse cx="-1" cy="-4" rx="14" ry="16" fill="none" stroke="#7c5a32" stroke-width="2"/><path d="M-12 4Q-8 2-9-6-8-14-4-13L-1-8 2-13Q7-14 7-6 7 2 10 4L0 10z" fill="#8a6638"/></svg>
<svg viewBox="-39.500 -44 79 96"><path d="M-28-26L20-33 28 27-20 33z" fill="#f4f4f4" stroke="#f4f4f4" stroke-width="2" stroke-dasharray="3 2"/><path d="M-24-22L17-28 24 23-17 29z" fill="#4a8cd0"/><path d="M-16-20L-10-18-4-8 0 0 8 4 17 14 15 20 4 14-4 10-12 16-16 12-10 6-8-2z" fill="#7a5232"/><path d="M-14 12L-8 8-10 16z" fill="#eee"/></svg>
<svg viewBox="-39.500 -44 79 96"><path d="M0 32L-35-8-22-29 0-32 22-29 35-8z" fill="#f5a730"/><path d="M-22-29L-18-8-35-8zM22-29L18-8H35z" fill="#f8c040"/><path d="M-18-8L0-31 18-8z" fill="#fbe49a"/><path d="M-35-8H-18L0 32zM35-8H18L0 32z" fill="#e88420"/></svg>
<svg viewBox="-39.500 -44 79 96"><rect x="-31" y="-31" width="62" height="63" rx="14" fill="#2a2c36"/><path d="M0-23H-8A8 8 0 0 0-8-8H0z" fill="#f05a38"/><path d="M0-23H8A8 8 0 0 1 8-8H0z" fill="#f57a6a"/><path d="M0-8H-8A8 8 0 0 0-8 7H0z" fill="#9a5cf8"/><circle cx="8" r="8" fill="#50b8fa"/><path d="M0 7H-8A8 8 0 1 0 0 15z" fill="#58cc88"/></svg>
<svg viewBox="-39.500 -44 79 96"><rect x="-34" y="-35" width="67" height="65" fill="#0c2733" stroke="#58d0f8" stroke-width="3"/><text class="adobe" y="11" textLength="38" lengthAdjust="spacingAndGlyphs" fill="#58d0f8">Ps</text></svg>
<svg viewBox="-39.500 -44 79 96"><rect x="-34" y="-35" width="67" height="65" fill="#2c1804" stroke="#f59a30" stroke-width="3"/><text class="adobe" y="11" textLength="36" lengthAdjust="spacingAndGlyphs" fill="#f59a30">Ai</text></svg>
<svg viewBox="-39.500 -44 79 96"><rect x="-34" y="-35" width="67" height="65" fill="#2e0812" stroke="#f05a94" stroke-width="3"/><text class="adobe" y="11" textLength="34" lengthAdjust="spacingAndGlyphs" fill="#f05a94">Id</text></svg>
<svg viewBox="-39.500 -44 79 96"><rect x="-33" y="-35" width="66" height="65" rx="10" fill="#2a0420" stroke="#f048c0" stroke-width="3"/><text class="adobe" y="11" textLength="44" lengthAdjust="spacingAndGlyphs" fill="#fbd8f4">Xd</text></svg>
<svg viewBox="-39.500 -44 79 96"><path d="M-33-22L18-30 27 22-24 30z" fill="#eef0ea"/><path d="M0-27L18-30 22 2 0-8z" fill="#9cd878"/><path d="M-31-10L-14-4-8 28-24 30z" fill="#f0b8c8"/><path d="M-20-24L-8 28" stroke="#f5c640" stroke-width="7"/><circle cx="-14" cy="6" r="8" fill="#2a78d8"/><path d="M-18-24L-16 4" stroke="#3a88e8" stroke-width="6"/><circle cx="22" cy="14" r="14" fill="#f4f4f4" stroke="#999"/><text x="22" y="19" class="tiny">3D</text></svg>
<svg viewBox="-39.500 -44 79 96"><path d="M-30-22L22-32 31 22-24 31z" fill="#50585e"/><path d="M-28-22L20-31 27 16-22 26z" fill="#fafafa"/><path d="M-28-22L20-31 22-18-26-9z" fill="#e05048"/><text y="-16" x="-1" class="apr" transform="rotate(-10)">APR</text><text y="18" x="-2" class="d25" transform="rotate(-9)">25</text><circle class="dot" cy="44" r="4"/></svg>
<svg viewBox="-39.500 -44 79 96"><circle r="32" fill="#f6f6f6"/><g opacity=".85"><ellipse cy="-15" rx="8" ry="13" fill="#f5a030"/><ellipse cy="-15" rx="8" ry="13" fill="#e8d838" transform="rotate(45)"/><ellipse cy="-15" rx="8" ry="13" fill="#a8cc48" transform="rotate(90)"/><ellipse cy="-15" rx="8" ry="13" fill="#58b498" transform="rotate(135)"/><ellipse cy="-15" rx="8" ry="13" fill="#68a8e0" transform="rotate(180)"/><ellipse cy="-15" rx="8" ry="13" fill="#8c7cc8" transform="rotate(225)"/><ellipse cy="-15" rx="8" ry="13" fill="#b878b8" transform="rotate(270)"/><ellipse cy="-15" rx="8" ry="13" fill="#ee5848" transform="rotate(315)"/></g><circle class="dot" cy="44" r="4"/></svg>
<svg viewBox="-39.500 -44 79 96"><path d="M-18 16L-20 28-6 20z" fill="#2567e6"/><ellipse rx="32" ry="27" cy="-2" fill="url(#dSky)"/><path d="M14 26L24 32 24 22z" fill="#eef4f8"/><ellipse cx="11" cy="12" rx="19" ry="16" fill="#f4f8fa"/><g fill="#1c58b0"><circle cx="2" cy="13" r="3"/><circle cx="11" cy="13" r="3"/><circle cx="20" cy="13" r="3"/></g><circle cx="25" cy="-23" r="14" fill="#df4a3c"/><text x="25" y="-16" class="badge">1</text></svg>
<svg viewBox="-39.500 -44 79 96"><rect x="-32" y="-28" width="58" height="52" rx="8" fill="url(#dGreen)"/><rect x="-23" y="-15" width="28" height="26" rx="5" fill="#eef8ee"/><path d="M6-4L16-12V10L6 4z" fill="#eef8ee"/><circle cx="17" cy="12" r="16" fill="#f0f0f0"/><path d="M10 4Q12 20 24 20L25 15 19 13 17 15 13 9 15 7 13 3z" fill="#50c840"/></svg>
<svg viewBox="-39.500 -44 79 96"><path d="M-30-26L18-33 28 26-20 33z" fill="#f8f8f8"/><path d="M-30-26L18-33 20-23-28-16z" fill="#f09a30"/><text x="-11" y="-20" class="pg" transform="rotate(-8)">PAGES</text><path d="M-21-10L0-13 2 2-19 5z" fill="#2c5ca8"/><path d="M-14-8L-4-10-3-3-9 2-13-3z" fill="#f58a28"/><path d="M-18 14L18 9M-17 20L20 15M-16 26L14 22M6-8L16-9M7-3L14-4" stroke="#999" stroke-width="1.500"/><path d="M26-32L10 22 8 30" stroke="#f0a030" stroke-width="5" fill="none"/><path d="M12 14L8 30" stroke="#333" stroke-width="4"/></svg>
<svg viewBox="-39.500 -44 79 96"><path d="M-24-32H24L29-8V-5H-29V-8z" fill="#3f98e8"/><path d="M-17-28H17V-11H-17z" fill="#f4f8fc"/><circle cx="-6" cy="-18" r="6" fill="#58b878"/><path d="M-6-24A6 6 0 0 1 0-18H-6z" fill="#f08030"/><path d="M4-22H14M4-18H14M4-14H14" stroke="#e08ab0" stroke-width="2"/><path d="M0-5V26" stroke="#b8ccd8" stroke-width="3"/><ellipse cy="28" rx="14" ry="5" fill="#a8c0d4"/></svg>
<svg viewBox="-39.500 -44 79 96"><circle r="31" fill="#f8f4f4" stroke="#e85060" stroke-width="2"/><path d="M-18-18H-8L18 6V18H8L-18-6zM8-18H18V-4L8-12zM-8 18H-18V4L-8 12z" fill="#ea4258"/></svg>
<svg viewBox="-39.500 -44 79 96"><circle r="31" fill="#f6f2f8" stroke="url(#dTune)" stroke-width="3"/><path d="M-8-15L15-20V10M-7-15V14" stroke="url(#dNote)" stroke-width="5" fill="none"/><path d="M-8-17L16-22V-14L-8-9z" fill="#ee4a80"/><circle cx="-11" cy="15" r="6.500" fill="#8a5cf0"/><circle cx="10" cy="11" r="6.500" fill="#58a8f0"/></svg>
<svg viewBox="-39.500 -44 79 96"><rect x="-32" y="-30" width="64" height="60" rx="3" fill="url(#dRocket)"/><circle r="26" fill="#33363a"/><circle r="20" fill="none" stroke="#9a9ea2" stroke-width="5"/><circle r="24" fill="none" stroke="#9a9ea2" stroke-width="4" stroke-dasharray="3 3"/><path d="M0 0H20M0 0L-10-18M0 0L-10 18" stroke="#9a9ea2" stroke-width="4"/></svg>
<svg viewBox="-39.500 -44 79 96"><rect x="-34" y="-35" width="67" height="65" fill="#2a0604" stroke="#f23c20" stroke-width="4"/><path d="M-18 16C-12 4 2-6 2-18 2-24-4-24-4-16-3-2 10 10 20 9 22 4 0 2-14 10-20 14-20 20-16 18" fill="none" stroke="#fff" stroke-width="2.500"/><circle class="dot" cy="44" r="4"/></svg>
<svg viewBox="-39.500 -44 79 96"><circle r="31" fill="url(#dSky)" stroke="#eee" stroke-width="3"/><path d="M4-20L-14 12M-2-20L16 14M-20 6H8M14 6H21" stroke="#fff" stroke-width="5" stroke-linecap="round"/></svg>
<svg viewBox="-39.500 -44 79 96"><path d="M5-26H33V26H5z" fill="#f6f6f6"/><path d="M8-18H16M20-18H28M8-9H16M20-9H28M8 0H16M20 0H28M8 9H16M20 9H28M8 18H16M20 18H28" stroke="#247a4a" stroke-width="6"/><path d="M-32-24L5-32V32L-32 24z" fill="#248a50"/><path d="M-22-12L-9 12M-9-12L-22 12" stroke="#fff" stroke-width="4"/><circle class="dot" cy="44" r="4"/></svg>
<svg viewBox="-39.500 -44 79 96"><path d="M-27-25L22-33 30 26-20 33z" fill="#c0c0c4"/><path d="M-27-25L22-33 24-22-26-14z" fill="#243038"/><path d="M14-20L24-22 30 26 19 28z" fill="#f08030"/><path d="M-12-16L-8 31M1-18L7 30M-24-4L26-12M-22 8L28 0M-21 20L29 13" stroke="#888" stroke-width="1.500"/><text x="1" y="-20" class="pg2" transform="rotate(-8)">3.141593</text><circle class="dot" cy="44" r="4"/></svg>
<svg viewBox="-39.500 -44 79 96"><path d="M-28-26L20-33 29 26-20 33z" fill="#f8f8f6"/><path d="M-28-26L20-33 21-24-27-16z" fill="#fcd440"/><path d="M-25-8L23-15M-24 0L24-7M-23 8L26 1M-22 16L27 9M-21 24L28 17" stroke="#ccc" stroke-width="1.500"/><circle class="dot" cy="44" r="4"/></svg>
<svg viewBox="-39.500 -44 79 96"><rect x="-31" y="-31" width="62" height="63" rx="12" fill="#481c4c"/><g stroke-width="8" stroke-linecap="round"><path d="M-5-17V-17M-17-4H-5" stroke="#5cc8f0"/><path d="M5-17V-5M17-5V-5" stroke="#50b888"/><path d="M5 6H16M5 17V17" stroke="#e8b440"/><path d="M-17 6H-17M-5 6V17" stroke="#dc2c68"/></g><circle cx="25" cy="-23" r="14" fill="#df4a3c"/><text x="25" y="-16" class="badge">4</text><circle class="dot" cy="44" r="4"/></svg>
<svg viewBox="-39.500 -44 79 96"><rect x="-33" y="-33" width="66" height="66" rx="12" fill="#c8764a"/><rect x="-27" y="-28" width="54" height="56" rx="6" fill="#f4f0ea"/><path d="M-20-28H20V28L0 20-20 28z" fill="#d83c2c"/><path d="M0-14L4-2H15L6 3 10 13 0 7-10 13-6 3-15-2H-4z" fill="#fff"/><circle class="dot" cy="44" r="4"/></svg>
<svg viewBox="-39.500 -44 79 96"><circle r="32.500" fill="#fafafa"/><path d="M-22-6L-10-7-9-20Q-4-26 4-20 16-20 18-10 21 6 17 20 14 25 6 24 -1 22 2 15 6 12 10 15L7 18Q11 21 12 16 12 10 4 10 0 6-2 10-8 14-14 11-22 6-22-6z" fill="#4aa83c"/><path d="M-20-9L-12-18V-9z" fill="#4aa83c"/><path d="M9-3Q12-6 14-1" stroke="#fff" stroke-width="2.500" fill="none"/></svg>
<svg viewBox="-39.500 -44 79 96"><circle r="33.500" fill="#fafafa"/><path d="M-8 7V-4C-8-20 14-20 13-5 12 5 3 6 0 4" fill="none" stroke="url(#dP)" stroke-width="10"/><circle cx="1" cy="-4" r="3" fill="#fafafa"/><path d="M-13 9Q-4 6-4 12-4 18-9 21-14 18-13 9z" fill="#4a2a98"/></svg>
<svg viewBox="-39.500 -44 79 96"><rect x="-37" y="-37" width="74" height="74" fill="#3a78bc"/><path d="M-20 24H-6L-4 14H8L9 24H23L12-23H-7z" fill="#fff"/><path d="M-4-18H6L-6 8z" fill="#3a78bc"/><path d="M-30 30L30-30" stroke="#3a78bc" stroke-width="6"/><path d="M-30 30L30-30" stroke="#fff" stroke-width="2.500"/></svg>
<i class="dsep"></i>
<svg viewBox="-39.500 -44 79 96"><circle r="31" fill="url(#dAtom)" stroke="#e8f4e8" stroke-width="2"/><g fill="none" stroke="#fff" stroke-width="2"><ellipse rx="7" ry="19"/><ellipse rx="7" ry="19" transform="rotate(60)"/><ellipse rx="7" ry="19" transform="rotate(120)"/></g><circle r="2.500" fill="#fff"/><circle class="dot" cy="44" r="4"/></svg>
<svg viewBox="-39.500 -44 79 96"><circle r="33" fill="url(#dGit)" stroke="#eee" stroke-width="2"/><path d="M-20-24L-10-18Q0-21 10-18L20-24 21-12Q28 8 8 13L9 32H-9V24Q-18 26-22 14-14 22-9 18L-8 13Q-28 8-21-12z" fill="#f4f0f8"/><circle class="dot" cy="44" r="4"/></svg>
<svg viewBox="-39.500 -44 79 96"><path d="M-34-29L20-36Q26-36 28-30L36 24-18 34Q-24 34-26 28z" fill="#45464c"/><path d="M-32-12L-20 0-12 8 6-4 4 8 14 14 18 24 6 31-12 27-27 12z" fill="#f0eeec"/><path d="M-33-30L-22-26-10-12-4 0-12 6-28-10z" fill="#111"/><path d="M-12 6L-4 4-6 11z" fill="#d22"/><path d="M-6 14L6 12 2 20 8 28-2 24z" fill="#222"/><circle class="dot" cy="44" r="4"/></svg>
<svg viewBox="-39.500 -44 79 96"><path d="M-26-28H30V26H-20z" fill="#8a7050"/><path d="M-32-16L24-30 30 14-24 27z" fill="#f4f4f4"/><path d="M-28-13L21-25 26 11-21 22z" fill="#7ab0e0"/><path d="M-26 0L24-6 26 11-21 22z" fill="#2f5c8c"/><path d="M-23 14L-8 8 4 14-21 22z" fill="#8a7a60"/><path d="M10 12V26Q20 34 30 26V12z" fill="#5a5048"/><circle cx="20" cy="8" r="11" fill="#7a98b8" stroke="#222" stroke-width="3"/></svg>
<svg viewBox="-39.500 -44 79 96"><rect x="-37" y="-37" width="74" height="74" fill="url(#dD)"/><path d="M-15-18H-2C24-16 24 20-2 20H-15z" fill="none" stroke="#fff" stroke-width="9"/><circle class="dot" cy="44" r="4"/></svg>
<i class="dsep wide"></i>
<svg viewBox="-39.500 -44 79 96"><path d="M-24-30H26V-20H-24z" fill="#181818"/><path d="M-28-24H28V-8H-28z" fill="#f2f2f2"/><path d="M-30-13H31V19H-30z" fill="#f6f6f6"/><path d="M-30-13H31V-5H-30z" fill="#d4d8e2"/><path d="M-28-11H-20V-6H-28z" fill="#4a6a9c"/><path d="M-20-17H0" stroke="#5cb0d8" stroke-width="2"/><circle cx="-18" cy="-17" r="2.500" fill="#a0c840"/><path d="M-14-1H4M-8 3H12M-8 7H12" stroke="#c0c0c0" stroke-width="1.500"/><path d="M-5 10H3V13H-5z" fill="#4a6a9c"/></svg>
<svg viewBox="-39.500 -44 79 96"><path d="M-26-24L-20 28Q0 36 20 28L26-24z" fill="url(#dTrash)"/><path d="M-24-24L-22-31-14-30-10-34-2-30 4-34 12-30 20-33 24-26 18-20 0-18-16-20z" fill="#dcdcdc"/><path d="M-18-30L-8-22M-4-32L6-22M12-30L18-22M-14-22L0-28" stroke="#445" stroke-width="2.500"/><ellipse cy="-24" rx="26" ry="6" fill="none" stroke="#777" stroke-width="1.500"/></svg>
</footer>
<script src="viewports.js"></script>
</body>
</html>
```
FILE: viewports.js
```js
// Draws the construction-plane grids and the repeated star curves.
const NS = 'http://www.w3.org/2000/svg';

function addPath(parent, d, attrs) {
  const p = document.createElementNS(NS, 'path');
  p.setAttribute('d', d);
  for (const k in attrs) p.setAttribute(k, attrs[k]);
  parent.appendChild(p);
}

// data-grid: left top right bottom originX originY spacing; every tenth line is major
document.querySelectorAll('.cgrid').forEach(g => {
  const [l, t, r, b, ox, oy, s] = g.dataset.grid.split(' ').map(Number);
  let minor = '', major = '';
  for (let i = Math.ceil((l - ox) / s); ox + i * s < r; i++) {
    const seg = `M${Math.round(ox + i * s)} ${t}V${b}`;
    if (i % 10) minor += seg; else major += seg;
  }
  for (let i = Math.ceil((t - oy) / s); oy + i * s < b; i++) {
    const seg = `M${l} ${Math.round(oy + i * s)}H${r}`;
    if (i % 10) minor += seg; else major += seg;
  }
  addPath(g, minor, { class: 'minor' });
  addPath(g, major, { class: 'major' });
});

const floor = document.getElementById('floor');
const corners = [[534, 107], [1391, 277], [1267, 1486], [417, 1319]];
const mix = (a, b, k) => [a[0] + (b[0] - a[0]) * k, a[1] + (b[1] - a[1]) * k];
let lines = '';
for (let i = 0; i <= 20; i++) {
  const k = i / 20;
  lines += 'M' + mix(corners[0], corners[1], k) + 'L' + mix(corners[3], corners[2], k);
  lines += 'M' + mix(corners[0], corners[3], k) + 'L' + mix(corners[1], corners[2], k);
}
addPath(floor, lines, {});

const stars = document.getElementById('stars');
[[5, 92], [194, 129], [384, 167], [91, 223], [281, 261], [-20, 328], [172, 365], [362, 402], [69, 458], [259, 497],
 [150, 600], [340, 637], [47, 694], [237, 732], [127, 834], [317, 871], [25, 929], [215, 965], [105, 1067], [295, 1105],
 [4, 1162], [194, 1198], [-17, 1398], [84, 1300], [273, 1337], [172, 1430], [61, 1532]].forEach(([x, y]) => {
  const u = document.createElementNS(NS, 'use');
  u.setAttribute('href', '#star');
  u.setAttribute('x', x);
  u.setAttribute('y', y);
  stars.appendChild(u);
});
```
FILE: styles.css
```css
* { box-sizing: border-box; margin: 0; padding: 0; }
body { width: 3360px; height: 2100px; overflow: hidden; font-family: Inter, "Liberation Sans", sans-serif; color: #222; display: flex; flex-direction: column; position: relative; background: linear-gradient(#1c1c1e 0 266px, #300a06 267px 326px, #64180e 328px 520px, #777 560px 1940px, #050505 1990px); }
i { font-style: normal; display: block; flex: none; }
svg { display: block; flex: none; }
span, b, text { white-space: nowrap; }
.sprite { position: absolute; }

.menubar { height: 46px; flex: none; display: grid; grid-template-columns: 41px 67px 193px 81px 87px 99px 114px 139px 102px 107px 173px 169px 105px 137px 131px 139px 490px 426px 55px 91px 194px 220px; align-items: center; font-size: 27px; letter-spacing: -.3px; color: #fff; background: linear-gradient(90deg, #262822, #35362a 270px, #1c2020 520px, #1b2a28 900px, #493a2f 1270px, #3e3d38 1500px, #1f302d 1680px, #1b1c1c 2400px, #2c2a1f 2850px, #202222); border-bottom: 2px solid #050505; }
.menubar b { font-weight: 700; letter-spacing: .3px; }
.menubar .apple { width: 28px; height: 34px; grid-column: 2; margin-top: -6px; }
.menubar .status-icons, .menubar .end-icons { width: 100%; height: 44px; }
.menubar .batt { width: 52px; height: 44px; }
.menubar .pct { font-size: 24px; letter-spacing: -.6px; }

.window { width: 3352px; height: 1948px; flex: none; border-radius: 10px; overflow: hidden; background: #ececec; display: flex; flex-direction: column; box-shadow: 0 2px 0 #3a3a3a; }
.titlebar { height: 114px; flex: none; background: linear-gradient(#f2f2f2, #e4e4e4 2px, #cacaca 112px); border-bottom: 2px solid #a0a0a0; display: flex; flex-direction: column; }
.title-row { height: 44px; display: flex; align-items: center; padding-left: 16px; gap: 16px; }
.light { width: 24px; height: 24px; border-radius: 50%; border: 1px solid #0002; }
.red { background: radial-gradient(#5a0f0a 4px, #ee6a5e 5px); }
.amber { background: #f5bf4f; }
.green { background: #61c554; }
.doc-title { display: flex; align-items: center; margin-left: 1367px; font-size: 26px; color: #4a4a4a; letter-spacing: -.35px; }
.doc-title svg { width: 22px; height: 30px; margin-right: 13px; }
.doc-title .t1 { width: 207px; }
.doc-title .t2 { color: #9c9c9c; }
.mode-row { height: 60px; display: flex; align-items: center; padding: 0 29px 0 28px; font-size: 23px; font-weight: 600; color: #474747; }
.side-toggle { width: 39px; height: 40px; border: 2.500px solid #2a76f0; border-left-width: 12px; border-radius: 1px; }
.side-toggle.right { border-left-width: 2.500px; border-right-width: 12px; margin-left: auto; }
.mode { height: 31px; line-height: 32px; text-align: center; border-radius: 5px; letter-spacing: -.3px; }
.m1 { width: 160px; margin-left: 110px; }
.m2 { width: 110px; margin-left: 24px; }
.m3 { width: 110px; margin-left: 27px; }
.m4 { width: 184px; margin-left: 22px; }
.m5 { width: 144px; margin-left: 17px; }
.m6 { width: 120px; margin-left: 23px; }
.mode.on { background: #868686; color: #fff; }
.osnap { width: 112px; height: 52px; margin-left: 822px; }
.layer-pop { width: 387px; height: 36px; margin-left: 13px; border-radius: 7px; background: linear-gradient(#fff, #f4f4f4); border: 1px solid #c4c4c4; border-bottom-color: #9d9d9d; display: flex; align-items: center; padding-left: 9px; font-size: 22px; font-weight: 400; }
.layer-pop i { width: 28px; height: 28px; background: #000; }
.layer-pop span { width: 342px; text-align: center; letter-spacing: -.1px; }

.content { height: 1779px; flex: none; display: flex; }
.sidebar { width: 322px; flex: none; border-right: 2px solid #828282; background: #ececec; display: flex; flex-direction: column; }
.side-head { height: 52px; background: linear-gradient(#f8f8f8, #e4e4e4); border-bottom: 2px solid #cbcbcb; flex: none; }
.tools-panel { height: 864px; flex: none; border-bottom: 3px solid #808080; padding-top: 21px; }
.command { width: 286px; height: 42px; margin-left: 17px; background: #fff; border: 1px solid #b4b4b4; font-size: 25px; line-height: 46px; padding-left: 7px; color: #bdbdbd; }
.tools { display: grid; grid-template-columns: repeat(5, 60px); grid-auto-rows: 60px; margin-top: 16px; }
.tool { position: relative; }
.tool svg { width: 60px; height: 60px; fill: none; stroke: #000; stroke-width: 5; overflow: visible; }
.tool .g { stroke: #888; }
.tool.more::after { content: ""; position: absolute; left: 44px; top: 44.500px; border: 5px solid transparent; border-top: 10px solid #333; border-bottom: 0; }
.wheel { width: 38px; height: 38px; margin: 12px 0 0 11px; border-radius: 50%; border: 2px solid #000; background: radial-gradient(#ececec 0 9.500px, transparent 10.500px), conic-gradient(#f33, #fa3, #cf3, #3d5, #3df, #36f, #c3f, #f39, #f33); }
.snaps { list-style: none; font-size: 22px; letter-spacing: .1px; padding-top: 10px; }
.snaps li { height: 36.020px; display: flex; align-items: center; padding-left: 40px; gap: 10px; }
.snaps li.gap { margin-top: 11px; }
.snaps li.last { margin-top: 36px; }
.snaps i { width: 24px; height: 24px; border-radius: 5px; background: #fff; border: 1px solid #bdbdbd; border-top-color: #a5a5a5; }
.radio { width: 28px; height: 28px; border-radius: 50%; background: #fff; border: 1.500px solid #a8a8a8; }
.snaps .radio { width: 28px; height: 28px; border-radius: 50%; margin: 0 -2px; }
.radio.on, .snaps .radio.on { background: radial-gradient(#fff 4px, #4a88f4 5px); border: 0; }
.snaps .checked { background: #4a88f4; border: 0; }
.snaps .off { color: #b2b2b2; }
.snaps .off i { background: #f4f4f4; border-color: #d0d0d0; }

.center { width: 2430px; flex: none; display: flex; flex-direction: column; }
.view-tabs { height: 52px; flex: none; border-bottom: 2px solid #6e6e6e; background: linear-gradient(#f9f9f9, #e4e4e4); display: flex; align-items: center; font-size: 26px; letter-spacing: -.3px; color: #4c4c4c; padding-left: 8px; }
.vicons { width: 120px; height: 50px; }
.view-tabs span { height: 28px; line-height: 29px; border-left: 2px solid #8a8a8a; }
.v1 { width: 221px; padding-left: 37px; margin-left: 14px; }
.v2 { width: 123px; padding-left: 36px; }
.v3 { width: 142px; padding-left: 37px; }
.v4 { width: 140px; padding-left: 37px; }
.view-tabs .active { color: #2f7af5; }
.view-tabs .layouts { border: 0; margin-left: auto; margin-right: 23px; font-size: 24px; line-height: 34px; color: #1c1c1c; letter-spacing: 0; }
.views { flex: 1; background: #d6d6d6; display: grid; grid-template-columns: 1217px 1210px; grid-template-rows: 828px 893px; gap: 6px 3px; }
.view { width: 100%; height: 100%; background: #9da3ab; overflow: hidden; }
.minor { stroke: #939aa2; stroke-width: 2; fill: none; shape-rendering: crispEdges; }
.major { stroke: #81868e; stroke-width: 2; fill: none; shape-rendering: crispEdges; }
.persp *, #star { vector-effect: non-scaling-stroke; }
.ax { font: 23px Roboto, sans-serif; fill: #666; }
.vl { font: 700 23.500px Inter, sans-serif; letter-spacing: -.2px; fill: #fff; }

.inspector { width: 600px; flex: none; border-left: 2px solid #828282; background: #fff; display: flex; flex-direction: column; overflow: hidden; }
.ptabs { height: 52px; flex: none; background: linear-gradient(#f9f9f9, #e2e2e2); border-bottom: 2px solid #cfcfcf; display: flex; padding-left: 59px; }
.ptabs svg { width: 48.100px; height: 48px; stroke: #555; stroke-width: 1.800; fill: none; }
.ptabs svg.sel { stroke: #2f7af5; }
.ptabs b { font: 700 42px/48px "Open Sans", sans-serif; color: #4a4a4a; width: 48px; text-align: center; }
.ptabs b.sel { color: #2a76f5; }
.lrow { display: grid; grid-template-columns: 83px 46px 46px 46px 60px 48px 114px 46px 109px; height: 34px; align-items: center; justify-items: center; font-size: 22px; letter-spacing: -.5px; }
.lhead { height: 47px; border-bottom: 2px solid #cfcfcf; justify-items: stretch; letter-spacing: -.3px; }
.lhead span { height: 34px; line-height: 34px; border-right: 2px solid #dcdcdc; padding-left: 9px; overflow: hidden; }
.lhead span:last-child { border: 0; }
.layers { height: 771px; flex: none; }
.lrow .nm { justify-self: start; padding-left: 39px; }
.ic { width: 28px; height: 32px; }
.dim { opacity: .45; }
.sw { width: 28px; height: 28px; border: 2px solid #000; }
.mat { width: 23px; height: 23px; border-radius: 50%; background: linear-gradient(150deg, #f0f0f0 5%, #b4b4b4 28%, #4a4a4a 52%, #0c0c0c 72%, #8a8a8a 92%); }
.lt { justify-self: start; width: 100%; display: flex; align-items: center; justify-content: space-between; padding: 3px 9px 0 14px; }
.lt svg { width: 14px; height: 22px; margin-top: -3px; }
.dia { width: 21px; height: 21px; border: 2px solid #000; transform: rotate(45deg); }
.c0 { background: #000; } .c1 { background: #ef4023; } .c2 { background: #874fce; } .c3 { background: #0036f8; } .c4 { background: #3a8a26; } .c5 { background: #fff; }
.lbar { height: 68px; flex: none; background: #ececec; border-top: 2px solid #cfcfcf; border-bottom: 3px solid #808080; display: flex; align-items: center; padding: 0 0 4px 36px; }
.pm, .gear { height: 34px; background: #fcfcfc; border-radius: 6px; box-shadow: 0 0 0 1px #ccc; }
.pm { width: 93px; }
.gear { width: 70px; margin-left: 34px; }
.lower { height: 51px; }

.help { flex: 1; overflow: hidden; padding: 4px 20px 0; font: 26px/28px "Liberation Sans", Arial, sans-serif; letter-spacing: .1px; color: #000; }
.help a { color: #0018e8; }
.help h1 { font-size: 44.500px; line-height: 52px; height: 59px; border-bottom: 2px solid #bcbcbc; letter-spacing: 0; }
.where { width: 257px; height: 191px; margin-top: 10px; border: 2px solid #cfcfcf; letter-spacing: 0; }
.wh { height: 38px; background: #dcdcdc; border-bottom: 1px solid #cfcfcf; line-height: 38px; padding-left: 10px; display: flex; }
.wh b:first-child { width: 113px; }
.wb { display: flex; height: 149px; background: #f4f4f4; }
.w1 { width: 113px; border-right: 2px solid #cfcfcf; padding: 18px 0 0 10px; }
.w1 svg { width: 76px; height: 76px; }
.w1 a { display: block; margin-top: 15px; letter-spacing: -.2px; }
.w1 .r { font-size: 18px; }
.w2 { padding: 11px 0 0 9px; display: flex; flex-direction: column; gap: 10px; }
.w2 .in { padding-left: 41px; }
.intro { margin-top: 11px; }
.steps { margin-top: 19px; height: 164px; border-radius: 8px; background: #f4f4f4; padding: 11px 20px; }
.steps h2 { font-size: 26px; line-height: 28px; height: 28px; border-bottom: 2px solid #bcbcbc; }
.step { display: flex; padding: 9px 0 0 34px; line-height: 32px; }
.step i { border: 10px solid transparent; border-left: 12px solid #7c1210; border-right: 0; height: 20px; margin: 4px 24px 0 0; }
.opts { margin-top: 20px; width: 548px; border: 2px solid #cfcfcf; }
.opts h3 { font-size: 26px; line-height: 28px; padding: 6px 11px 2px; border-bottom: 2px solid #888; }
.orow { display: flex; border-bottom: 2px solid #cfcfcf; }
.orow > span { width: 164px; padding: 11px 0 0 10px; border-right: 2px solid #cfcfcf; letter-spacing: 0; }
.orow > div { padding: 11px 0 12px 10px; width: 382px; }
.orow p + p { margin-top: 10px; }
kbd { font: inherit; color: #0018e8; background: #dedede; border: 1px solid #b8b8b8; border-radius: 5px; padding: 0 7px; }

.statusbar { height: 55px; flex: none; background: linear-gradient(#d8d8d8, #c6c6c6); display: flex; align-items: center; padding: 3px 0 0 9px; font-size: 22px; letter-spacing: -.1px; }
.statusbar > svg { width: 28px; height: 20px; }
.s0 { margin-left: 5px; width: 2289px; color: #000; letter-spacing: .18px; }
.s1 { width: 147px; }
.cplane { width: 140px; height: 32px; border: 2px solid #9a9a9a; border-radius: 7px; display: flex; align-items: center; justify-content: space-between; padding: 0 8px 0 12px; }
.cplane svg { width: 14px; height: 20px; }
.s2 { margin-left: 28px; width: 164px; } .s3 { width: 170px; }

.dock { width: 3241px; height: 97px; margin: 9px 0 0 60px; flex: none; background: linear-gradient(#242424, #2e2e2e); border: 2px solid #484848; border-bottom: 0; border-radius: 8px 8px 0 0; display: flex; padding-left: 3.500px; position: relative; top: 1px; }
.dock svg { width: 78.940px; height: 96px; }
.dot { fill: #b4b4b4; }
.dsep { width: 3px; height: 50px; background: #5c5c5c; margin: 19px 15.500px; }
.dsep.wide { height: 72px; margin: 10px 17px; }
.adobe { font: 600 43px "Open Sans", sans-serif; text-anchor: middle; }
.badge { font-size: 19px; fill: #fff; text-anchor: middle; }
.tiny { font-size: 12px; text-anchor: middle; }
.apr { font-size: 14px; fill: #fff; text-anchor: middle; }
.d25 { font-size: 34px; font-weight: 300; text-anchor: middle; }
.pg { font-size: 9px; fill: #fff; text-anchor: middle; }
.pg2 { font-size: 9px; fill: #ccc; text-anchor: middle; }
```
